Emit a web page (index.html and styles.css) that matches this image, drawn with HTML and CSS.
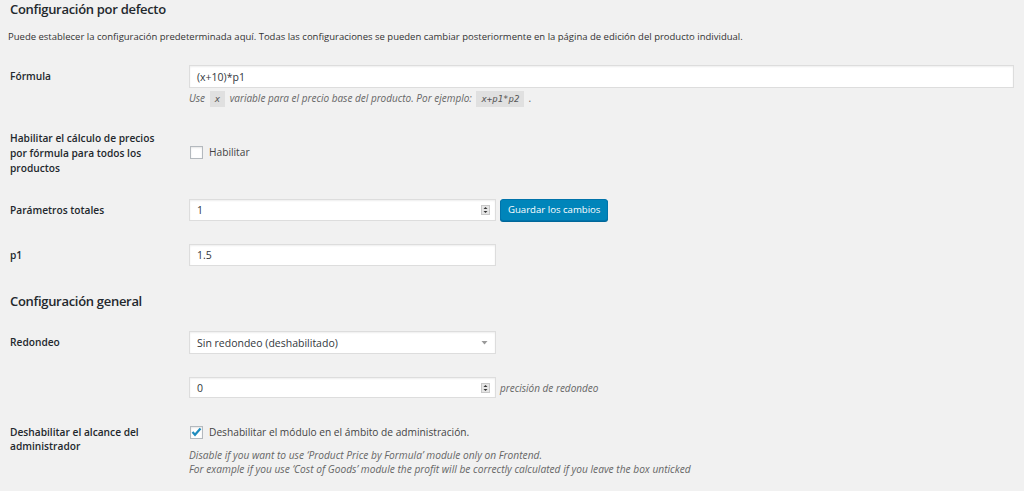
FILE: index.html
```html
<!DOCTYPE html>
<html lang="es">
<head>
<meta charset="utf-8">
<title>Configuración</title>
<link rel="stylesheet" href="styles.css">
</head>
<body>
<div class="wrap">
  <h2 class="title t1">Configuración por defecto</h2>
  <p class="intro">Puede establecer la configuración predeterminada aquí. Todas las configuraciones se pueden cambiar posteriormente en la página de edición del producto individual.</p>

  <div class="row r-formula">
    <div class="label">Fórmula</div>
    <div class="field">
      <div class="input wide">(x+10)*p1</div>
      <p class="desc">Use <code>x</code> variable para el precio base del producto. Por ejemplo: <code>x+p1*p2</code> .</p>
    </div>
  </div>

  <div class="row r-enable center">
    <div class="label">Habilitar el cálculo de precios por fórmula para todos los productos</div>
    <div class="field">
      <label class="check"><span class="box"></span>Habilitar</label>
    </div>
  </div>

  <div class="row r-params">
    <div class="label">Parámetros totales</div>
    <div class="field inline">
      <div class="input small">1<span class="spin"><svg width="9" height="10" viewBox="0 0 9 10"><rect x="0.5" y="0.5" width="8" height="9" fill="#e6e6e6" stroke="#c8c8c8"/><path d="M2.5 4 L4.5 2 L6.5 4 Z M2.5 6 L4.5 8 L6.5 6 Z" fill="#333"/></svg></span></div>
      <button class="btn">Guardar los cambios</button>
    </div>
  </div>

  <div class="row r-p1">
    <div class="label">p1</div>
    <div class="field">
      <div class="input small">1.5</div>
    </div>
  </div>

  <h2 class="title t2">Configuración general</h2>

  <div class="row r-round">
    <div class="label">Redondeo</div>
    <div class="field">
      <div class="input small select">Sin redondeo (deshabilitado)<span class="arrow"><svg width="7" height="5" viewBox="0 0 7 5"><path d="M0.5 1 L6.5 1 L3.5 4.5 Z" fill="#999"/></svg></span></div>
    </div>
  </div>

  <div class="row r-prec">
    <div class="label"></div>
    <div class="field inline">
      <div class="input small num">0<span class="spin"><svg width="9" height="10" viewBox="0 0 9 10"><rect x="0.5" y="0.5" width="8" height="9" fill="#e6e6e6" stroke="#c8c8c8"/><path d="M2.5 4 L4.5 2 L6.5 4 Z M2.5 6 L4.5 8 L6.5 6 Z" fill="#333"/></svg></span></div>
      <span class="desc inline-desc">precisión de redondeo</span>
    </div>
  </div>

  <div class="row r-admin">
    <div class="label">Deshabilitar el alcance del administrador</div>
    <div class="field">
      <label class="check"><span class="box checked"><svg width="11" height="10" viewBox="0 0 11 10"><path d="M1.5 5 L4 7.8 L9.5 1.5" fill="none" stroke="#1e8cbe" stroke-width="2.2"/></svg></span>Deshabilitar el módulo en el ámbito de administración.</label>
      <p class="desc two">Disable if you want to use ‘Product Price by Formula’ module only on Frontend.<br>For example if you use ‘Cost of Goods’ module the profit will be correctly calculated if you leave the box unticked</p>
    </div>
  </div>
</div>
</body>
</html>
```

FILE: styles.css
```css
* { box-sizing: border-box; }
html, body { margin: 0; padding: 0; background: #f1f1f1; }
body {
  font-family: "Open Sans", "Noto Sans", sans-serif;
  font-size: 10.5px;
  color: #23282d;
  line-height: 14px;
}
.wrap { padding: 0 0 0 10px; }

.title {
  font-size: 13px;
  font-weight: 600;
  letter-spacing: -0.3px;
  line-height: 18px;
  margin: 0;
  color: #23282d;
}
.t1 { margin-top: 0; }
.t2 { margin-top: 26px; }

.intro {
  margin: 12px 0 0 -2px;
  font-size: 9.5px;
  line-height: 14px;
  color: #333;
}

.row {
  display: grid;
  grid-template-columns: 179px 1fr;
  align-items: start;
}
.row.center { align-items: center; }
.label {
  font-weight: 600;
  font-size: 10.2px;
  width: 150px;
  line-height: 14px;
  padding-top: 4px;
  color: #23282d;
}
.row.center .label { padding-top: 0; line-height: 15px; }
.r-enable .field { padding-bottom: 3px; }

.r-formula { margin-top: 21px; }
.r-enable { margin-top: 25px; }
.r-params { margin-top: 23px; }
.r-p1 { margin-top: 23px; }
.r-round { margin-top: 21px; }
.r-prec { margin-top: 23px; }
.r-admin { margin-top: 27px; }
.r-admin .label { padding-top: 0; }

.field.inline { display: flex; align-items: center; }

.input {
  position: relative;
  background: #fff;
  border: 1px solid #ddd;
  box-shadow: inset 0 1px 2px rgba(0,0,0,.07);
  height: 22px;
  padding: 0 7px;
  display: flex;
  align-items: center;
  color: #32373c;
  font-size: 10.5px;
}
.input.wide { width: 825px; height: 23px; }
.input.small { width: 307px; }
.input.num { height: 21px; }
.input.select { height: 23px; }

.spin {
  position: absolute;
  right: 5px;
  top: 50%;
  margin-top: -5px;
  height: 10px;
  display: block;
}
.spin svg { display: block; }
.arrow {
  position: absolute;
  right: 7px;
  top: 50%;
  margin-top: -3px;
  display: block;
}
.arrow svg { display: block; }

.btn {
  margin-left: 4px;
  height: 22px;
  padding: 0 7px;
  background: #0085ba;
  border: 1px solid #0073aa;
  border-radius: 3px;
  box-shadow: 0 1px 0 #006799;
  color: #fff;
  font-family: "Open Sans", "Noto Sans", sans-serif;
  font-size: 9.6px;
  line-height: 20px;
  cursor: pointer;
}

.desc {
  margin: 3px 0 0 0;
  font-style: italic;
  color: #666;
  font-size: 10px;
  line-height: 14px;
}
.desc code {
  font-family: "DejaVu Sans Mono", "Liberation Mono", monospace;
  font-style: italic;
  font-size: 9px;
  background: rgba(0,0,0,.07);
  padding: 3px 5px;
  margin: 0 2px;
  color: #555;
}
.inline-desc { margin: 0 0 0 4px; }
.desc.two { margin-top: 9px; font-size: 10.2px; }

.check {
  display: flex;
  align-items: center;
  color: #444;
  font-size: 10.2px;
  line-height: 14px;
}
.box {
  width: 13px;
  height: 13px;
  margin: 0 6px 0 1px;
  background: #fff;
  border: 1px solid #b4b9be;
  box-shadow: inset 0 1px 2px rgba(0,0,0,.1);
  display: flex;
  align-items: center;
  justify-content: center;
}
.box svg { display: block; }
.r-admin .check { margin-top: 0; }
```
